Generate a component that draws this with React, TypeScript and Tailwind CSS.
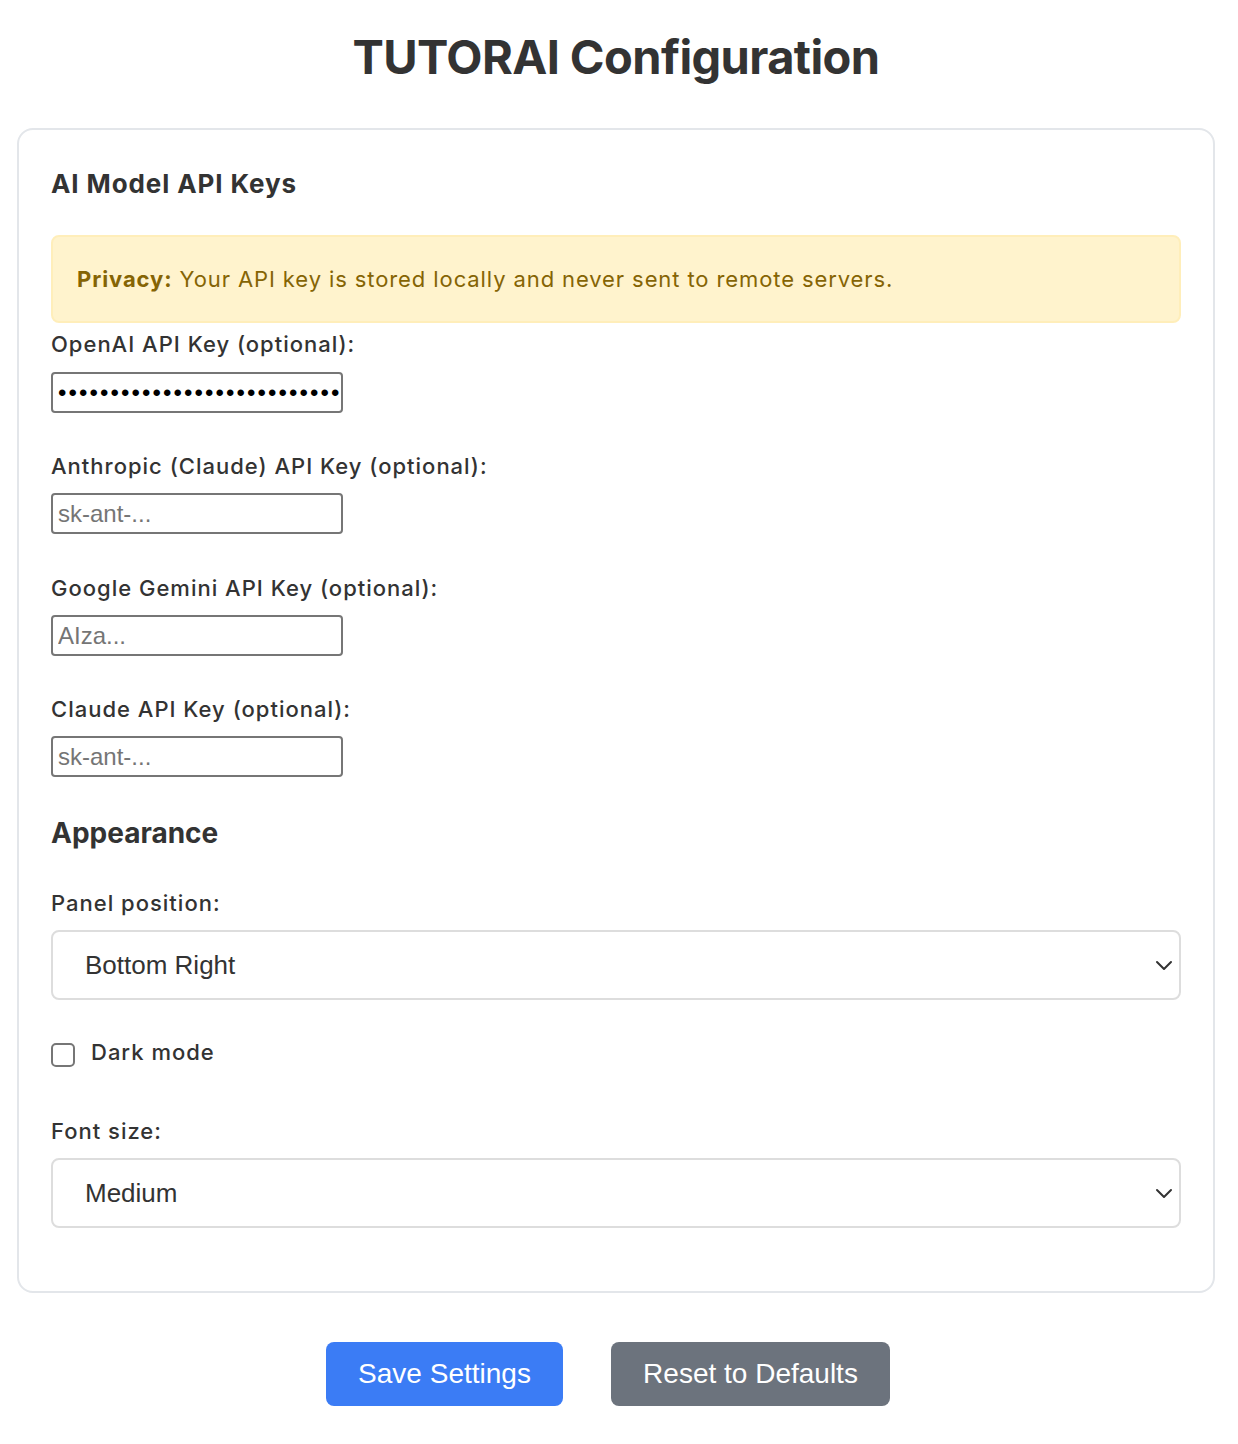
import { useState } from 'react';

const labelCls = "block text-[22px] leading-[28px] font-medium tracking-[1px] text-[#333]";
const inputCls =
  "block w-[292px] h-[41px] rounded-[4px] border-2 border-[#767676] bg-white pl-[5px] text-[24px] text-[#333] placeholder:text-[#757575] outline-none";

function KeyField({ label, placeholder, value, type = 'text', gap }: { label: string; placeholder?: string; value?: string; type?: string; gap: string }) {
  return (
    <div className={gap}>
      <label className={labelCls}>{label}</label>
      <input
        type={type}
        defaultValue={value}
        placeholder={placeholder}
        className={inputCls + (type === 'password' ? " mt-[14px] tracking-[2.1px] text-black" : " mt-[13px]")}
        style={{ fontFamily: '"Liberation Sans", Arial, sans-serif' }}
      />
    </div>
  );
}

function SelectField({ label, options, value }: { label: string; options: string[]; value: string }) {
  return (
    <div>
      <label className={labelCls}>{label}</label>
      <div className="relative mt-[13px]">
        <select
          defaultValue={value}
          className="block w-full h-[70px] appearance-none rounded-[8px] border-2 border-[#dddddd] bg-white pl-[32px] text-[26px] text-[#333] outline-none"
          style={{ fontFamily: '"Liberation Sans", Arial, sans-serif' }}
        >
          {options.map((o) => (
            <option key={o}>{o}</option>
          ))}
        </select>
        <svg className="pointer-events-none absolute right-[8px] top-1/2 -translate-y-1/2" width="18" height="12" viewBox="0 0 18 12" fill="none">
          <path d="M2 3l7 7 7-7" stroke="#333" strokeWidth="2" strokeLinecap="round" strokeLinejoin="round" />
        </svg>
      </div>
    </div>
  );
}

export default function App() {
  const [dark, setDark] = useState(false);

  return (
    <div className="min-h-[1444px] bg-white pl-[17px] pr-[23px] pt-[29px]" style={{ fontFamily: 'Inter, "Noto Sans", sans-serif' }}>
      <h1 className="text-center text-[47px] leading-[56px] font-bold tracking-[-0.6px] text-[#333]">TUTORAI Configuration</h1>

      <div className="mt-[43px] rounded-[16px] border-2 border-[#e3e6ea] px-[32px] pt-[38px] pb-[63px]">
        <h2 className="text-[26px] leading-[32px] font-bold tracking-[0.9px] text-[#333]">AI Model API Keys</h2>

        <div className="mt-[35px] flex h-[88px] items-center rounded-[8px] border-2 border-[#ffeeba] bg-[#fff3cd] px-[24px] text-[22px] tracking-[0.9px] text-[#856404]">
          <p>
            <strong className="font-bold">Privacy:</strong> Your API key is stored locally and never sent to remote servers.
          </p>
        </div>

        <KeyField gap="mt-[7px]" label="OpenAI API Key (optional):" type="password" value="sk-proj-abcdefghijklmnopqrstuvw" />
        <KeyField gap="mt-[39px]" label="Anthropic (Claude) API Key (optional):" placeholder="sk-ant-..." />
        <KeyField gap="mt-[40px]" label="Google Gemini API Key (optional):" placeholder="AIza..." />
        <KeyField gap="mt-[39px]" label="Claude API Key (optional):" placeholder="sk-ant-..." />

        <h2 className="mt-[39px] text-[28px] leading-[34px] font-bold text-[#333]">Appearance</h2>

        <div className="mt-[39px]">
          <SelectField label="Panel position:" options={['Bottom Right', 'Bottom Left', 'Top Right', 'Top Left']} value="Bottom Right" />
        </div>

        <label className="mt-[43px] flex items-center gap-[16px] cursor-pointer">
          <input
            type="checkbox"
            checked={dark}
            onChange={(e) => setDark(e.target.checked)}
            className="h-[24px] w-[24px] appearance-none rounded-[5px] border-2 border-[#767676] bg-white"
          />
          <span className="-mt-[6px] text-[22px] leading-[28px] font-medium tracking-[1px] text-[#333]">Dark mode</span>
        </label>

        <div className="mt-[50px]">
          <SelectField label="Font size:" options={['Small', 'Medium', 'Large']} value="Medium" />
        </div>
      </div>

      <div className="mt-[49px] flex justify-center gap-[48px] pr-[16px]" style={{ fontFamily: '"Liberation Sans", Arial, sans-serif' }}>
        <button className="h-[64px] w-[237px] rounded-[8px] bg-[#3b7cf5] text-[28px] text-white">Save Settings</button>
        <button className="h-[64px] w-[279px] rounded-[8px] bg-[#6c737d] text-[28px] text-white">Reset to Defaults</button>
      </div>
    </div>
  );
}
